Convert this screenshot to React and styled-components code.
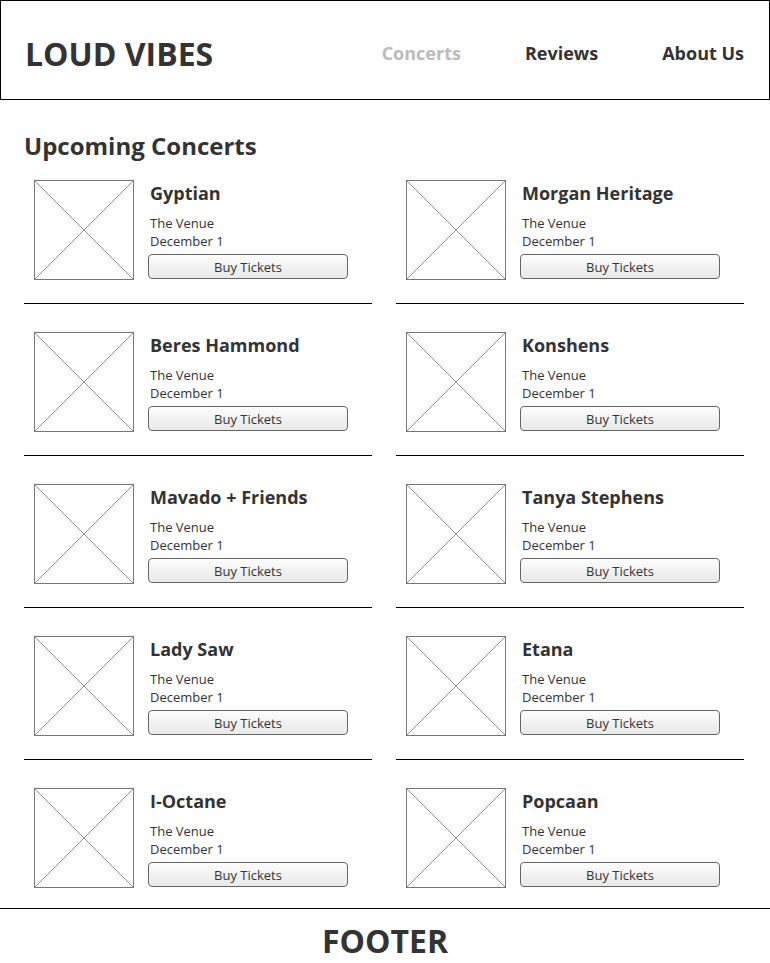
import styled, { createGlobalStyle } from 'styled-components';

const GlobalStyle = createGlobalStyle`
  body {
    margin: 0;
    background: #fff;
    font-family: 'Open Sans', sans-serif;
    color: #333;
  }
`;

const Header = styled.header`
  height: 92px;
  border: 1px solid #000;
  display: flex;
  align-items: center;
  justify-content: space-between;
  padding: 6px 25px 0 24px;
`;

const Logo = styled.h1`
  margin: 0;
  font-size: 32px;
  font-weight: 700;
  color: #333;
`;

const Nav = styled.nav`
  display: flex;
  gap: 64px;
`;

const NavLink = styled.a`
  font-size: 18px;
  font-weight: 700;
  color: ${(p) => (p.active ? '#bbb' : '#333')};
  text-decoration: none;
`;

const Main = styled.main`
  padding: 0 26px 0 24px;
`;

const Title = styled.h2`
  margin: 30px 0 18px;
  font-size: 24px;
  font-weight: 700;
  line-height: 32px;
  color: #333;
`;

const Grid = styled.div`
  display: grid;
  grid-template-columns: 1fr 1fr;
  column-gap: 24px;
  row-gap: 28px;
`;

const Card = styled.div`
  display: flex;
  gap: 14px;
  padding: 0 0 23px 10px;
  border-bottom: ${(p) => (p.last ? 'none' : '1px solid #000')};
  padding-bottom: ${(p) => (p.last ? '20px' : '23px')};
`;

const Thumb = styled.svg`
  width: 100px;
  height: 100px;
  flex: none;
  display: block;
`;

const Info = styled.div`
  display: flex;
  flex-direction: column;
  width: 200px;
`;

const Name = styled.h3`
  margin: 0;
  font-size: 18px;
  font-weight: 700;
  line-height: 26px;
  color: #333;
  padding-left: 2px;
`;

const Meta = styled.p`
  margin: 0;
  font-size: 13px;
  line-height: 18px;
  color: #333;
  padding-left: 2px;
`;

const Venue = styled(Meta)`
  margin-top: 8px;
`;

const Button = styled.button`
  margin-top: 4px;
  width: 200px;
  height: 25px;
  border: 1px solid #666;
  border-radius: 4px;
  background: linear-gradient(#fdfdfd, #e8e8e8);
  font-family: 'Open Sans', sans-serif;
  font-size: 13px;
  color: #333;
  padding: 0;
  cursor: pointer;
`;

const Footer = styled.footer`
  border-top: 1px solid #000;
  padding-top: 10px;
  text-align: center;
  font-size: 32px;
  line-height: 44px;
  font-weight: 700;
  color: #333;
`;

const concerts = [
  'Gyptian',
  'Morgan Heritage',
  'Beres Hammond',
  'Konshens',
  'Mavado + Friends',
  'Tanya Stephens',
  'Lady Saw',
  'Etana',
  'I-Octane',
  'Popcaan',
];

const Placeholder = () => (
  <Thumb viewBox="0 0 100 100">
    <rect x="0.5" y="0.5" width="99" height="99" fill="#fff" stroke="#777" />
    <line x1="0.5" y1="0.5" x2="99.5" y2="99.5" stroke="#777" strokeWidth="0.8" />
    <line x1="99.5" y1="0.5" x2="0.5" y2="99.5" stroke="#777" strokeWidth="0.8" />
  </Thumb>
);

const App = () => {
  return (
    <>
      <GlobalStyle />
      <Header>
        <Logo>LOUD VIBES</Logo>
        <Nav>
          <NavLink href="#" active>
            Concerts
          </NavLink>
          <NavLink href="#">Reviews</NavLink>
          <NavLink href="#">About Us</NavLink>
        </Nav>
      </Header>
      <Main>
        <Title>Upcoming Concerts</Title>
        <Grid>
          {concerts.map((name, i) => (
            <Card key={name} last={i >= concerts.length - 2}>
              <Placeholder />
              <Info>
                <Name>{name}</Name>
                <Venue>The Venue</Venue>
                <Meta>December 1</Meta>
                <Button>Buy Tickets</Button>
              </Info>
            </Card>
          ))}
        </Grid>
      </Main>
      <Footer>FOOTER</Footer>
    </>
  );
};

export default App;
